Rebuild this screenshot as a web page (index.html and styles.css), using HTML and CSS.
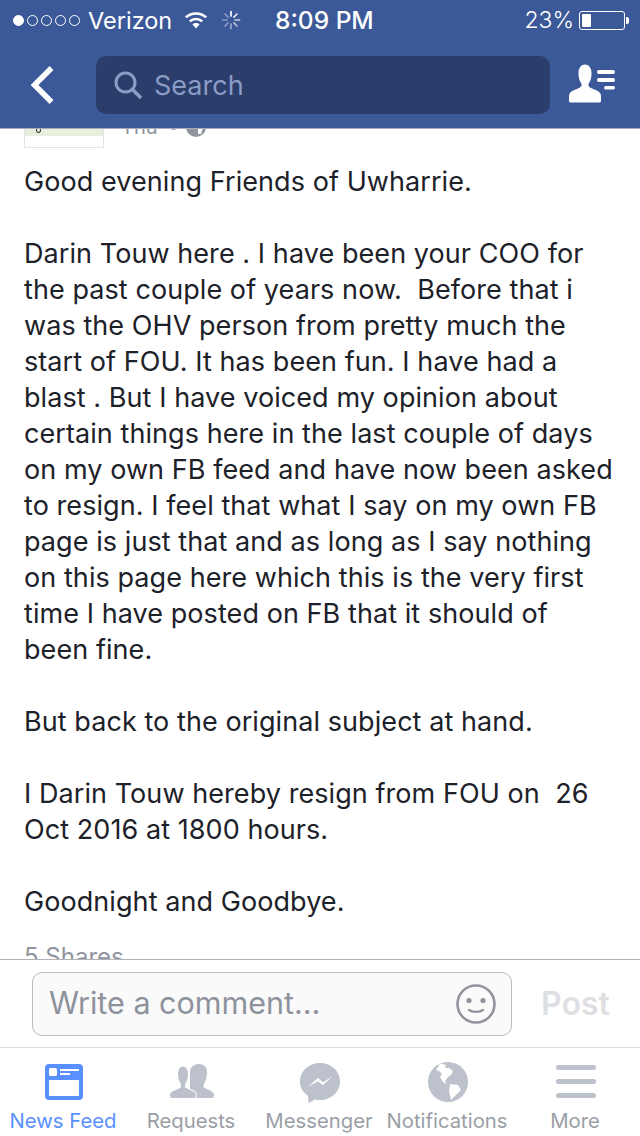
FILE: index.html
```html
<!DOCTYPE html>
<html lang="en">
<head>
    <meta charset="UTF-8">
    <meta name="viewport" content="width=device-width, initial-scale=1.0">
    <title>Post</title>
    <link rel="stylesheet" href="styles.css">
</head>
<body>

<div class="app">
    <header class="top-bar">
        <div class="status-bar">
            <div class="status-left">
                <span class="signal">
                    <i class="dot full"></i><i class="dot"></i><i class="dot"></i><i class="dot"></i><i class="dot"></i>
                </span>
                <span class="carrier">Verizon</span>
                <svg class="wifi" width="24" height="18" viewBox="0 0 24 18">
                    <path d="M12 17.500 L8.400 13.300 C10.400 11.500 13.600 11.500 15.600 13.300 Z" fill="#fff"/>
                    <path d="M5.800 10.400 C9.300 7.200 14.700 7.200 18.200 10.400" fill="none" stroke="#fff" stroke-width="2.600"/>
                    <path d="M1.800 6.400 C7.500 1.200 16.500 1.200 22.200 6.400" fill="none" stroke="#fff" stroke-width="2.600"/>
                </svg>
                <svg class="spinner" width="20" height="20" viewBox="0 0 20 20" stroke-width="1.700" stroke-linecap="round">
                    <path d="M10 1.500V6" stroke="#fff"/>
                    <path d="M16 4L12.900 7.100" stroke="#e4e9f2"/>
                    <path d="M18.500 10H14" stroke="#ccd4e5"/>
                    <path d="M16 16L12.900 12.900" stroke="#b4c0d8"/>
                    <path d="M10 18.500V14" stroke="#9dabcb"/>
                    <path d="M4 16L7.100 12.900" stroke="#8b9cc0"/>
                    <path d="M1.500 10H6" stroke="#8b9cc0"/>
                    <path d="M4 4L7.100 7.100" stroke="#8b9cc0"/>
                </svg>
            </div>
            <div class="clock">8:09 PM</div>
            <div class="status-right">
                <span class="battery-text">23%</span>
                <span class="battery"><span class="battery-level" style="width: 23%"></span></span>
                <span class="battery-tip"></span>
            </div>
        </div>
        <nav class="nav-bar">
            <button class="back-button" aria-label="Back">
                <svg width="26" height="40" viewBox="0 0 26 40">
                    <path d="M22.500 3 L5.500 20 L22.500 37" fill="none" stroke="#fff" stroke-width="5.500"/>
                </svg>
            </button>
            <div class="search-box">
                <svg width="30" height="30" viewBox="0 0 30 30">
                    <circle cx="12.500" cy="12.500" r="9.500" fill="none" stroke="#8b9cc6" stroke-width="3"/>
                    <path d="M19.500 19.500 L28 28" stroke="#8b9cc6" stroke-width="3.600"/>
                </svg>
                <span class="search-text">Search</span>
            </div>
            <button class="friends-button" aria-label="Online friends">
                <svg width="48" height="40" viewBox="0 0 48 40">
                    <path d="M1 37 V32 C1 27 7 26 11 24 C14 22.500 14 21 13 19 C11 16 10.500 13 10.500 9 C10.500 3.500 13.500 0.500 17 0.500 C20.500 0.500 23.500 3.500 23.500 9 C23.500 13 23 16 21 19 C20 21 20 22.500 23 24 C27 26 33 27 33 32 V37 C33 38 32 38.500 31 38.500 H3 C2 38.500 1 38 1 37 Z" fill="#fff"/>
                    <rect x="29" y="6" width="18" height="4" rx="2" fill="#fff"/>
                    <rect x="29" y="14" width="18" height="4" rx="2" fill="#fff"/>
                    <rect x="36" y="22" width="11" height="3.500" rx="1.750" fill="#fff"/>
                </svg>
            </button>
        </nav>
    </header>

    <main class="content">
        <div class="post-head">
            <div class="thumb"><div class="thumb-map"><span class="thumb-mark"></span></div></div>
            <div class="post-meta">
                <span>Thu</span>
                <span class="meta-dot"></span>
                <svg width="20" height="20" viewBox="0 0 20 20">
                    <circle cx="10" cy="10" r="10" fill="#90949c"/>
                    <path d="M7 2 L12 3 L11 7 L7 9 L4 6 Z M12 12 L17 11 L15 17 L12 17 Z" fill="#fff"/>
                </svg>
            </div>
        </div>
        <div class="post-body">
            <p>Good evening Friends of Uwharrie.</p>
            <p>Darin Touw here . I have been your COO for<br>the past couple of years now.  Before that i<br>was the OHV person from pretty much the<br>start of FOU. It has been fun. I have had a<br>blast . But I have voiced my opinion about<br>certain things here in the last couple of days<br>on my own FB feed and have now been asked<br>to resign. I feel that what I say on my own FB<br>page is just that and as long as I say nothing<br>on this page here which this is the very first<br>time I have posted on FB that it should of<br>been fine.</p>
            <p>But back to the original subject at hand.</p>
            <p>I Darin Touw hereby resign from FOU on  26<br>Oct 2016 at 1800 hours.</p>
            <p>Goodnight and Goodbye.</p>
        </div>
        <div class="shares">5 Shares</div>
    </main>

    <div class="comment-bar">
        <div class="comment-box">
            <span class="comment-text">Write a comment...</span>
            <svg width="40" height="40" viewBox="0 0 40 40">
                <circle cx="20" cy="20" r="18.500" fill="none" stroke="#90949c" stroke-width="2.600"/>
                <circle cx="13" cy="16.500" r="2.600" fill="#90949c"/>
                <circle cx="27" cy="16.500" r="2.600" fill="#90949c"/>
                <path d="M13 26 C16.500 28.500 23.500 28.500 27 26" fill="none" stroke="#90949c" stroke-width="2.400" stroke-linecap="round"/>
            </svg>
        </div>
        <div class="post-button">Post</div>
    </div>

    <footer class="tab-bar">
        <div class="tab active">
            <svg class="tab-icon" width="38" height="36" viewBox="0 0 38 36">
                <rect width="38" height="36" rx="4" fill="#5890ff"/>
                <rect x="4" y="16" width="30" height="16" rx="1" fill="#fff"/>
                <rect x="4" y="4" width="8" height="8" rx="1.500" fill="#fff"/>
                <rect x="15" y="5" width="19" height="2" fill="#fff"/>
                <rect x="15" y="9" width="10" height="2" fill="#fff"/>
            </svg>
            <span>News Feed</span>
        </div>
        <div class="tab">
            <svg class="tab-icon" width="44" height="36" viewBox="0 0 44 36">
                <path d="M20 34 V8 C20 3 24 0 29 0 C34 0 37 3 37 8 C37 13 36 16 34.500 19 C33 21.500 33 23 35 24 C38 26 44 27 44 31 V32 C44 33.500 43 34 41.500 34 Z" fill="#bcc1cb"/>
                <path d="M0 31 C0 27 6 26.500 10 24 C11.500 23 11.500 21.500 10.500 19.500 C8.500 16 8 13 8 10 C8 5.500 10 2.500 13 2.500 C16 2.500 18 5.500 18 10 C18 13 17.500 16 15.500 19.500 C14.500 21.500 14.500 23 16 24 C20 26.500 26 27 26 31 V32 C26 33.500 25 34 23.500 34 H2.500 C1 34 0 33.500 0 32 Z" fill="#bcc1cb" stroke="#fff" stroke-width="2" paint-order="stroke"/>
            </svg>
            <span>Requests</span>
        </div>
        <div class="tab">
            <svg class="tab-icon icon-messenger" width="40" height="40" viewBox="0 0 40 40">
                <path d="M20 0 C31 0 40 8 40 18.500 C40 29 31 37 20 37 C18 37 16.500 36.800 15 36.400 L8.500 40 L8 33 C3 29.500 0 24.500 0 18.500 C0 8 9 0 20 0 Z" fill="#bcc1cb"/>
                <path d="M7.500 24 L18 15 L23 19.500 L32.700 12.700 L23 22.300 L18 18.300 Z" fill="#fff"/>
            </svg>
            <span>Messenger</span>
        </div>
        <div class="tab">
            <svg class="tab-icon icon-globe" width="40" height="40" viewBox="0 0 40 40">
                <circle cx="20" cy="20" r="20" fill="#bcc1cb"/>
                <path d="M12 1.500 L18 3 L17 6 L21 6 L25 9 L23 13 L19 16 L17 20 L20 23 L15 20 L12 15 L14 12 L11 9 L8 8 Z M22 22 L30 23 L33 28 L28 33 L23 38 L21 29 Z" fill="#fff"/>
            </svg>
            <span>Notifications</span>
        </div>
        <div class="tab">
            <div class="menu-lines tab-icon"><i></i><i></i><i></i></div>
            <span>More</span>
        </div>
    </footer>
</div>

</body>
</html>
```

FILE: styles.css
```css
* {
    box-sizing: border-box;
}
body {
    margin: 0;
    font-family: 'Inter', 'Liberation Sans', sans-serif;
    background: #fff;
}
.app {
    width: 640px;
    height: 1136px;
    display: flex;
    flex-direction: column;
    overflow: hidden;
}
.top-bar {
    height: 129px;
    flex-shrink: 0;
    background: #3b5998;
    border-bottom: 1px solid #a5abbd;
    color: #fff;
    position: relative;
    z-index: 1;
}
.status-bar {
    height: 40px;
    padding: 0 11px 0 13px;
    display: flex;
    align-items: center;
    font-size: 23.5px;
}
.status-left {
    display: flex;
    align-items: center;
    width: 262px;
}
.signal {
    display: flex;
    gap: 3px;
}
.dot {
    width: 11px;
    height: 11px;
    border: 1px solid #fff;
    border-radius: 50%;
}
.dot.full {
    background: #fff;
}
.carrier {
    margin-left: 8px;
}
.wifi {
    margin-left: 12px;
}
.spinner {
    margin-left: 13px;
}
.clock {
    font-size: 24.5px;
    font-weight: 500;
}
.status-right {
    display: flex;
    align-items: center;
    margin-left: auto;
}
.battery-text {
    margin-right: 5px;
    font-size: 23px;
    font-weight: 300;
}
.battery {
    width: 46px;
    height: 19px;
    border: 1px solid #fff;
    border-radius: 3px;
    padding: 2px;
    display: flex;
}
.battery-level {
    background: #fff;
    border-radius: 1px;
    min-width: 9px;
}
.battery-tip {
    width: 3px;
    height: 7px;
    margin-left: 1px;
    background: #fff;
    border-radius: 0 2px 2px 0;
}
.nav-bar {
    height: 88px;
    display: flex;
    align-items: flex-start;
    padding-top: 16px;
}
.back-button, .friends-button {
    background: none;
    border: none;
    padding: 0;
    display: flex;
}
.back-button {
    width: 96px;
    padding: 9px 0 0 29px;
}
.search-box {
    width: 454px;
    height: 58px;
    background: #2b3d6b;
    border-radius: 10px;
    display: flex;
    align-items: center;
    padding: 0 17px;
    gap: 11px;
    color: #8b9cc6;
    font-size: 27px;
}
.friends-button {
    margin-left: 18px;
    padding-top: 8px;
}
.content {
    flex: 1;
    min-height: 0;
    overflow: hidden;
    padding: 0 24px;
}
.post-head {
    display: flex;
    margin-top: -61px;
    height: 80px;
}
.thumb {
    width: 80px;
    height: 80px;
    border: 1px solid #e3e3e5;
    background: #fff;
}
.thumb-map {
    height: 67px;
    background: #e8efdc;
    padding: 58px 0 0 11px;
}
.thumb-mark {
    display: block;
    width: 5px;
    height: 6px;
    border: 1px solid #333;
    border-radius: 50%;
}
.post-meta {
    margin-left: 17px;
    margin-top: 44px;
    display: flex;
    align-items: center;
    height: 30px;
    color: #90949c;
    font-size: 20px;
}
.meta-dot {
    width: 5px;
    height: 5px;
    margin: 0 10px 0 13px;
    border-radius: 50%;
    background: #90949c;
}
.post-body {
    margin-top: 16px;
    font-size: 27px;
    line-height: 36px;
    letter-spacing: 0.07px;
    color: #1d2129;
}
.post-body p {
    margin: 0 0 36px;
    white-space: pre-wrap;
}
.shares {
    font-size: 24px;
    line-height: 36px;
    color: #90949c;
    margin-top: -17px;
}
.comment-bar {
    height: 89px;
    flex-shrink: 0;
    background: #fff;
    border-top: 1px solid #b0b2b8;
    border-bottom: 1px solid #dddfe2;
    display: flex;
    align-items: flex-start;
    padding: 12px 0 0 32px;
}
.comment-box {
    width: 480px;
    height: 64px;
    background: #fafafb;
    border: 1px solid #b8bbc2;
    border-radius: 10px;
    display: flex;
    align-items: center;
    justify-content: space-between;
    padding: 0 15px 4px 16px;
}
.comment-box svg {
    margin-top: 4px;
}
.comment-text {
    font-size: 30.5px;
    color: #8d929c;
}
.post-button {
    margin-left: 29px;
    font-size: 32px;
    line-height: 64px;
    font-weight: 600;
    color: #dddfe2;
}
.tab-bar {
    height: 88px;
    flex-shrink: 0;
    background: #fff;
    display: flex;
}
.tab {
    display: flex;
    flex-direction: column;
    align-items: center;
    justify-content: flex-end;
    height: 85px;
    width: 128px;
    font-size: 20.3px;
    color: #9a9ea6;
}
.tab span {
    white-space: nowrap;
    margin-right: 2px;
}
.tab-icon {
    margin-bottom: 8px;
}
.icon-messenger {
    margin-bottom: 5px;
}
.icon-globe {
    margin-bottom: 6px;
}
.tab.active {
    color: #5890ff;
}
.menu-lines {
    width: 40px;
    height: 33px;
    margin-bottom: 10px;
    display: flex;
    flex-direction: column;
    justify-content: space-between;
}
.menu-lines i {
    height: 5px;
    border-radius: 3px;
    background: #bcc1cb;
}
```
